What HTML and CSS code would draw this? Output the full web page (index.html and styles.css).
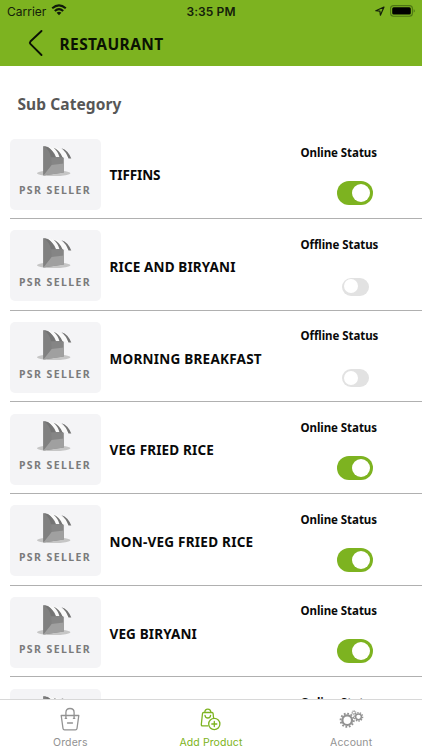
FILE: index.html
```
<!DOCTYPE html>
<html lang="en">
<head>
<meta charset="utf-8">
<title>Restaurant</title>
<link rel="stylesheet" href="styles.css">
</head>
<body>
<svg class="defs" aria-hidden="true">
  <symbol id="shop" viewBox="0 0 50 45">
    <ellipse cx="23.7" cy="33.2" rx="16.7" ry="2.9" fill="#c6c6c6"/>
    <path d="M13.3 6.3 L21.5 7.5 L33.8 18 V32.5 L13.3 35.6Z" fill="#858585"/>
    <path d="M21.5 25 L33.8 23.5 V32.5 L13.3 35.6Z" fill="#a0a0a0"/>
    <path d="M13.3 6.3 L21 8.2 L21.5 25 L13.3 35.2Z" fill="#808080"/>
    <path d="M18 7 C25 7 35 8.500 41 18.500 H38 L35 17 H26 C24 12 21 9 18 7Z" fill="#fafafa"/>
    <path d="M14 6.300 Q19 7 22 11 Q24.500 14 25.500 17.300 H21 Q19.500 10 14 6.300ZM23.500 7.800 Q29 9.500 32.500 17.300 H29.500 Q28 11.500 23.500 7.800ZM31.500 8.200 Q38 10 41.300 18.600 H38.500 Q36 11.500 31.500 8.200Z" fill="#747474"/>
  </symbol>
</svg>
<div class="screen">
  <header class="header">
    <div class="status-bar">
      <div class="carrier"><span>Carrier</span>
        <svg width="16" height="12" viewBox="0 0 16 12" fill="none" stroke="#10190a" stroke-width="2.1"><path d="M1.200 4.300 Q8 -1.600 14.800 4.300M3.800 7 Q8 3.200 12.200 7"/><path d="M5.600 8.800 Q8 6.800 10.400 8.800 L8 11.300Z" fill="#10190a" stroke="none"/></svg>
      </div>
      <div class="clock">3:35 PM</div>
      <div class="indicators">
        <svg width="10" height="10" viewBox="0 0 10 10" fill="none" stroke="#14200a" stroke-width="1.200" stroke-linejoin="round"><path d="M.8 4.700 L9 1 L5.400 9.200 L4.900 5.200Z"/></svg>
        <svg width="26" height="12" viewBox="0 0 26 12"><rect x=".6" y=".6" width="21.800" height="10.600" rx="3" fill="none" stroke="#4d7514" stroke-width="1.100"/><rect x="2.200" y="2.200" width="18.600" height="7.400" rx="1.500" fill="#000"/><path d="M23.700 4 Q26 5.900 23.700 7.800Z" fill="#4d7514"/></svg>
      </div>
    </div>
    <div class="title-bar">
      <svg width="16" height="28" viewBox="0 0 16 28" fill="none" stroke="#0b1105" stroke-width="1.900" stroke-linecap="round" stroke-linejoin="round"><path d="M13.500 2 L2.600 12.200 Q1.300 13.700 2.600 15.200 L13.500 26"/></svg>
      <h1>RESTAURANT</h1>
    </div>
  </header>
  <main class="content">
    <h2>Sub Category</h2>
    <ul class="list">
      <li class="row"><div class="thumb"><svg width="50" height="45"><use href="#shop"/></svg><span>PSR SELLER</span></div><div class="name n1">TIFFINS</div><div class="state"><span>Online Status</span><i class="toggle on"></i></div></li>
      <li class="row"><div class="thumb"><svg width="50" height="45"><use href="#shop"/></svg><span>PSR SELLER</span></div><div class="name n2">RICE AND BIRYANI</div><div class="state"><span>Offline Status</span><i class="toggle"></i></div></li>
      <li class="row"><div class="thumb"><svg width="50" height="45"><use href="#shop"/></svg><span>PSR SELLER</span></div><div class="name n3">MORNING BREAKFAST</div><div class="state"><span>Offline Status</span><i class="toggle"></i></div></li>
      <li class="row"><div class="thumb"><svg width="50" height="45"><use href="#shop"/></svg><span>PSR SELLER</span></div><div class="name n2">VEG FRIED RICE</div><div class="state"><span>Online Status</span><i class="toggle on"></i></div></li>
      <li class="row"><div class="thumb"><svg width="50" height="45"><use href="#shop"/></svg><span>PSR SELLER</span></div><div class="name n3">NON-VEG FRIED RICE</div><div class="state"><span>Online Status</span><i class="toggle on"></i></div></li>
      <li class="row"><div class="thumb"><svg width="50" height="45"><use href="#shop"/></svg><span>PSR SELLER</span></div><div class="name n2">VEG BIRYANI</div><div class="state"><span>Online Status</span><i class="toggle on"></i></div></li>
      <li class="row"><div class="thumb"><svg width="50" height="45"><use href="#shop"/></svg></div><div class="name"></div><div class="state"><span>Online Status</span></div></li>
    </ul>
  </main>
  <nav class="tabs">
    <div class="tab">
      <svg width="28" height="26" viewBox="0 0 28 26" fill="none" stroke="currentColor" stroke-width="1.300" stroke-linejoin="round" stroke-linecap="round"><path d="M5.200 8.500 H22.800 L21 21.500 Q20.800 22.800 19.500 22.800 H8.500 Q7.200 22.800 7 21.500ZM9.900 11 V5.500 Q9.900 1.500 14 1.500 Q18.100 1.500 18.100 5.500 V11M11.500 16 H16.500M9.200 11.300 H10.600M17.400 11.300 H18.800"/></svg>
      <span>Orders</span>
    </div>
    <div class="tab active">
      <svg width="28" height="26" viewBox="0 0 28 26" fill="none" stroke="currentColor" stroke-width="1.300" stroke-linejoin="round" stroke-linecap="round"><path d="M11 18.800 H5.500 Q4.200 18.800 4.300 17.500 L5.500 6.500 Q5.600 5.500 6.600 5.500 H15 Q16 5.500 16.100 6.500 L16.500 10.500M7.800 5.500 Q7.800 2.200 10.800 2.200 Q13.800 2.200 13.800 5.500M8 8.300 Q8.500 11 10.800 11 Q13.100 11 13.600 8.300"/><circle cx="17.300" cy="17" r="5.600"/><path d="M14.800 17 H19.800M17.300 14.500 V19.500"/></svg>
      <span>Add Product</span>
    </div>
    <div class="tab gears">
      <svg width="28" height="26" viewBox="0 0 28 26" fill="none" stroke="currentColor"><circle cx="10.200" cy="13.200" r="4.800" stroke-width="2.200"/><circle cx="10.200" cy="13.200" r="6.600" stroke-width="1.900" pathLength="24" stroke-dasharray="1.050 .950"/><circle cx="21.500" cy="9.800" r="2.900" stroke-width="1.500"/><circle cx="21.500" cy="9.800" r="4.200" stroke-width="1.300" pathLength="20" stroke-dasharray="1.100 .900"/><circle cx="16.900" cy="5.600" r="1.400" stroke-width=".8"/><circle cx="16.900" cy="5.600" r="2.100" stroke-width=".8" pathLength="16" stroke-dasharray="1 1"/></svg>
      <span>Account</span>
    </div>
  </nav>
</div>
</body>
</html>
```
FILE: styles.css
```
* { box-sizing: border-box; }
body { margin: 0; background: #fff; font-family: "Noto Sans", sans-serif; color: #090909; }
h1, h2, ul { margin: 0; padding: 0; }
.defs { position: absolute; width: 0; height: 0; }
.screen { width: 422px; height: 750px; display: flex; flex-direction: column; overflow: hidden; }
.header { height: 65.500px; flex: none; background: #7db320; }
.status-bar { height: 22px; display: grid; grid-template-columns: 1fr auto 1fr; align-items: center; padding: 0 6px 0 7px; font-family: Inter, sans-serif; font-size: 12px; color: #14200a; }
.carrier { display: flex; align-items: center; gap: 5px; letter-spacing: 0; }
.carrier svg { margin-top: -2px; }
.clock { font-weight: 600; letter-spacing: .1px; margin-right: 1px; }
.indicators { display: flex; align-items: center; justify-content: flex-end; gap: 4px; margin-top: -1px; }
.indicators svg:first-child { margin-right: 1px; }
.title-bar { height: 43px; display: flex; align-items: center; padding-left: 28px; gap: 15.500px; }
.title-bar svg { margin-top: -1px; }
h1 { font-size: 15.500px; line-height: 22px; font-weight: 700; letter-spacing: .4px; color: #0b1203; margin-top: 1px; }
.content { flex: 1; min-height: 0; overflow: hidden; }
h2 { height: 61.800px; padding: 26.500px 0 0 17.500px; font-size: 15.500px; line-height: 24px; letter-spacing: .08px; color: #575757; }
.list { list-style: none; }
.row { height: 91.670px; margin-left: 9.500px; padding-top: 11.500px; border-bottom: 1px solid #b0b0b0; display: grid; grid-template-columns: 100px 191px 1fr; align-items: start; }
.thumb { width: 91.500px; height: 71px; border-radius: 5px; background: #f4f4f6; display: flex; flex-direction: column; align-items: center; overflow: hidden; color: #7b7b7b; }
.thumb svg { flex: none; margin: 1.500px 0 0 0; }
.thumb span { font-size: 10.500px; line-height: 12px; font-weight: 700; letter-spacing: 1.400px; margin: -1px 0 0 -.500px; white-space: nowrap; }
.name { font-size: 13.500px; line-height: 20px; font-weight: 700; padding-top: 26.500px; white-space: nowrap; }
.n1 { letter-spacing: -.080px; }
.n2 { letter-spacing: .140px; }
.n3 { letter-spacing: .250px; }
.state { display: flex; flex-direction: column; font-size: 11.500px; line-height: 16px; font-weight: 700; letter-spacing: -.060px; padding-top: 6.200px; white-space: nowrap; }
.toggle { width: 27px; height: 18px; border-radius: 9px; background: #e2e2e2; margin: 25px 0 0 41.500px; padding: 1.500px; }
.toggle::before { content: ""; display: block; width: 14px; height: 14px; border-radius: 50%; background: #fff; }
.toggle.on { width: 36px; height: 24px; border-radius: 12px; background: #7db320; margin: 20px 0 0 36.500px; padding: 3px; }
.toggle.on::before { width: 18px; height: 18px; margin-left: 11.500px; }
.tabs { height: 51px; flex: none; border-top: 1px solid #d8d8d8; background: #fff; display: grid; grid-template-columns: repeat(3, 1fr); }
.tab { display: flex; flex-direction: column; align-items: center; padding-top: 7px; color: #929292; font-family: Inter, sans-serif; font-size: 10.500px; line-height: 14px; letter-spacing: .1px; }
.tab span { margin-top: 2.500px; }
.tab.active { color: #7db320; }
.tab.gears { padding-right: 1px; }
```
